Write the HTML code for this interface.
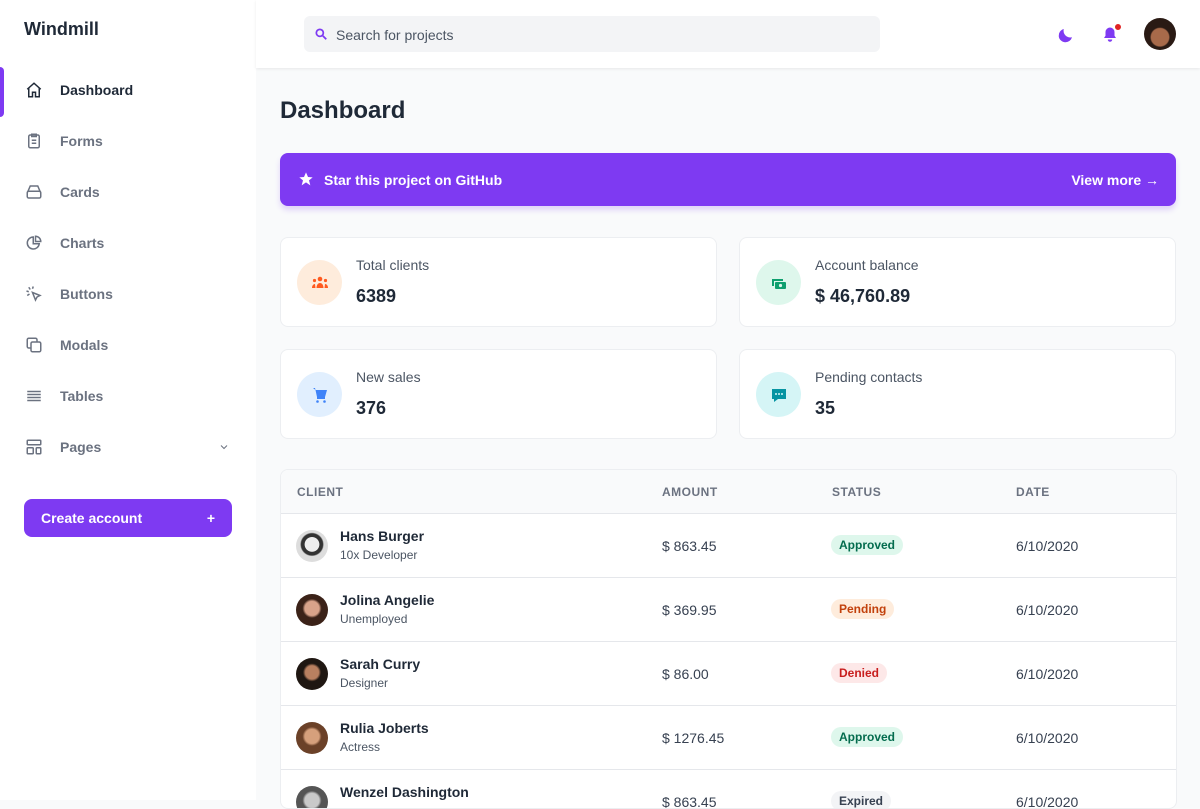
<!DOCTYPE html>
<html><head><meta charset="utf-8"><style>
*{box-sizing:border-box;margin:0;padding:0}
body{width:1200px;height:800px;overflow:hidden;font-family:"Liberation Sans",sans-serif;background:#f9fafb;color:#1a1c23;position:relative}
.side{position:absolute;left:0;top:0;width:256px;height:800px;background:#fff}
.logo{position:absolute;left:24px;top:19px;font-size:18px;font-weight:700;color:#1f2937}
.nav{position:absolute;left:0;width:256px;height:20px;font-size:14px;font-weight:700;color:#6b7280}
.nav svg{position:absolute;left:25px;top:1px}
.nav span{position:absolute;left:60px;top:2px}
.nav.act{color:#1f2937}
.bar{position:absolute;left:0;top:67px;width:4px;height:50px;background:#7e3af2;border-radius:0 8px 8px 0}
.btn{position:absolute;left:24px;top:499px;width:208px;height:38px;background:#7e3af2;border-radius:8px;color:#fff;font-size:14px;font-weight:700;padding:11px 17px}
.btn b{position:absolute;right:17px;top:11px;font-size:14px}
.hdr{position:absolute;left:256px;top:0;width:944px;height:68px;background:#fff;box-shadow:0 1px 3px rgba(0,0,0,.08)}
.search{position:absolute;left:48px;top:16px;width:576px;height:36px;background:#f3f4f6;border-radius:6px;font-size:14px;color:#4b5563;padding:11px 0 0 32px}
.search svg{position:absolute;left:10px;top:11px}
h1{position:absolute;left:280px;top:97px;font-size:24px;font-weight:700;color:#1f2937}
.gh{position:absolute;left:280px;top:153px;width:896px;height:53px;background:#7e3af2;border-radius:8px;color:#fff;font-size:14px;font-weight:700;box-shadow:0 4px 6px rgba(126,58,242,.2)}
.gh .l{position:absolute;left:44px;top:19px}
.gh .r{position:absolute;right:17px;top:19px}
.gh svg{position:absolute;left:18px;top:18px}
.card{position:absolute;width:437px;height:90px;background:#fff;border-radius:8px;border:1px solid #eceef1}
.card .ic{position:absolute;left:16px;top:22px;width:45px;height:45px;border-radius:50%}
.card .ic svg{position:absolute;left:13px;top:13px}
.card .t{position:absolute;left:75px;top:19px;font-size:14px;color:#4b5563}
.card .v{position:absolute;left:75px;top:48px;font-size:18px;font-weight:700;color:#1f2937}
.tbl{position:absolute;left:280px;top:469px;width:897px;height:340px;background:#fff;border:1px solid #eceef1;border-radius:8px;overflow:hidden}
.th{position:absolute;left:0;top:0;width:100%;height:44px;background:#f9fafb;border-bottom:1px solid #e5e7eb;font-size:12px;font-weight:700;color:#6b7280;letter-spacing:.5px}
.th span,.row span.c{position:absolute}
.row{position:absolute;left:0;width:100%;height:64px;border-bottom:1px solid #e5e7eb;font-size:14px;color:#374151}
.av{position:absolute;left:15px;top:16px;width:32px;height:32px;border-radius:50%}
.nm{position:absolute;left:59px;top:14px;font-weight:700;font-size:14px;color:#1f2937}
.jb{position:absolute;left:59px;top:34px;font-size:12px;color:#4b5563}
.pill{position:absolute;left:550px;top:21px;padding:3px 8px;border-radius:10px;font-size:12px;font-weight:700}
</style></head><body>
<div class="side">
<div class="logo">Windmill</div>
<div class="bar"></div>
<div class="nav act" style="top:80px"><svg width="18" height="18" viewBox="0 0 24 24" fill="none" stroke="currentColor" stroke-width="2"><path d="M3 11l9-8 9 8M5 9v12h5v-6h4v6h5V9"/></svg><span>Dashboard</span></div>
<div class="nav" style="top:131px"><svg width="18" height="18" viewBox="0 0 24 24" fill="none" stroke="currentColor" stroke-width="2"><rect x="5" y="4" width="14" height="17" rx="2"/><path d="M9 3h6v3H9zM9 11h6M9 15h6"/></svg><span>Forms</span></div>
<div class="nav" style="top:182px"><svg width="18" height="18" viewBox="0 0 24 24" fill="none" stroke="currentColor" stroke-width="2"><path d="M7 4h10l3 7H4z"/><rect x="3" y="11" width="18" height="9" rx="2"/></svg><span>Cards</span></div>
<div class="nav" style="top:233px"><svg width="18" height="18" viewBox="0 0 24 24" fill="none" stroke="currentColor" stroke-width="2"><path d="M11 4a8 8 0 108 9h-8z"/><path d="M14 3v7h7a7 7 0 00-7-7z"/></svg><span>Charts</span></div>
<div class="nav" style="top:284px"><svg width="18" height="18" viewBox="0 0 24 24" fill="none" stroke="currentColor" stroke-width="2"><path d="M10 10l10 4-4 2-2 4zM5 3l2 3M2 8l3 1M11 2l-1 3M3 14l3-2"/></svg><span>Buttons</span></div>
<div class="nav" style="top:335px"><svg width="18" height="18" viewBox="0 0 24 24" fill="none" stroke="currentColor" stroke-width="2"><rect x="8" y="8" width="13" height="13" rx="2"/><path d="M16 8V5a2 2 0 00-2-2H5a2 2 0 00-2 2v9a2 2 0 002 2h3"/></svg><span>Modals</span></div>
<div class="nav" style="top:386px"><svg width="18" height="18" viewBox="0 0 24 24" fill="none" stroke="currentColor" stroke-width="2"><path d="M3 6h18M3 10h18M3 14h18M3 18h18"/></svg><span>Tables</span></div>
<div class="nav" style="top:437px"><svg width="18" height="18" viewBox="0 0 24 24" fill="none" stroke="currentColor" stroke-width="2"><rect x="3" y="3" width="18" height="6" rx="1"/><rect x="3" y="13" width="8" height="8" rx="1"/><rect x="15" y="13" width="6" height="8" rx="1"/></svg><span>Pages</span><svg style="left:218px;top:4px" width="12" height="12" viewBox="0 0 24 24" fill="none" stroke="currentColor" stroke-width="2"><path d="M6 9l6 6 6-6"/></svg></div>
<div class="btn">Create account<b>+</b></div>
</div>
<div class="hdr">
<div class="search"><svg width="14" height="14" viewBox="0 0 24 24" fill="none" stroke="#7e3af2" stroke-width="3"><circle cx="10" cy="10" r="6"/><path d="M15 15l6 6"/></svg>Search for projects</div>
<svg style="position:absolute;left:801px;top:26px" width="18" height="18" viewBox="0 0 24 24"><path fill="#7e3af2" d="M20 15A9 9 0 019 4a9 9 0 1011 11z"/></svg>
<svg style="position:absolute;left:845px;top:26px" width="18" height="18" viewBox="0 0 24 24"><path fill="#7e3af2" d="M12 2a6 6 0 00-6 6v5l-2 3h16l-2-3V8a6 6 0 00-6-6zM9 18a3 3 0 006 0z"/></svg>
<div style="position:absolute;left:858px;top:23px;width:8px;height:8px;border-radius:50%;background:#e02424;border:1px solid #fff"></div>
<div style="position:absolute;left:888px;top:18px;width:32px;height:32px;border-radius:50%;background:radial-gradient(circle at 50% 60%,#a86a4a 0 35%,#2a1a14 40%)"></div>
</div>
<h1>Dashboard</h1>
<div class="gh"><svg width="16" height="16" viewBox="0 0 24 24"><path fill="#fff" d="M12 2l3 7 7 .5-5.5 4.5 2 7.5L12 17l-6.5 4.5 2-7.5L2 9.5 9 9z"/></svg><span class="l">Star this project on GitHub</span><span class="r">View more →</span></div>
<div class="card" style="left:280px;top:237px"><div class="ic" style="background:#feecdc"><svg width="20" height="20" viewBox="0 0 20 20" fill="#ff5a1f"><circle cx="10" cy="6" r="2.3"/><circle cx="4.5" cy="7.5" r="1.6"/><circle cx="15.5" cy="7.5" r="1.6"/><path d="M6.5 15c0-3 1.5-5 3.5-5s3.5 2 3.5 5zM2 15c0-2 1-4 3-4l.5 4zM18 15c0-2-1-4-3-4l-.5 4z"/></svg></div><div class="t">Total clients</div><div class="v">6389</div></div>
<div class="card" style="left:739px;top:237px"><div class="ic" style="background:#def7ec"><svg width="20" height="20" viewBox="0 0 20 20" fill="#0e9f6e"><path d="M3 6h11v2H5v5H3z"/><rect x="6" y="9" width="11" height="7" rx="1"/><circle cx="11.5" cy="12.5" r="1.6" fill="#def7ec"/></svg></div><div class="t">Account balance</div><div class="v">$ 46,760.89</div></div>
<div class="card" style="left:280px;top:349px"><div class="ic" style="background:#e1effe"><svg width="20" height="20" viewBox="0 0 20 20" fill="#3f83f8"><path d="M3 3h2l.5 2H17l-2 7H7L5.5 5"/><path d="M7 12h8v2H7z"/><circle cx="7.5" cy="16.5" r="1.3"/><circle cx="14.5" cy="16.5" r="1.3"/></svg></div><div class="t">New sales</div><div class="v">376</div></div>
<div class="card" style="left:739px;top:349px"><div class="ic" style="background:#d5f5f6"><svg width="20" height="20" viewBox="0 0 20 20" fill="#0694a2"><path d="M3 4h14v10H9l-4 3v-3H3z"/><circle cx="7" cy="9" r="1" fill="#d5f5f6"/><circle cx="10" cy="9" r="1" fill="#d5f5f6"/><circle cx="13" cy="9" r="1" fill="#d5f5f6"/></svg></div><div class="t">Pending contacts</div><div class="v">35</div></div>
<div class="tbl">
<div class="th"><span style="left:16px;top:15px">CLIENT</span><span style="left:381px;top:15px">AMOUNT</span><span style="left:551px;top:15px">STATUS</span><span style="left:735px;top:15px">DATE</span></div>
<div class="row" style="top:44px"><div class="av" style="background:radial-gradient(circle at 50% 45%,#eee 0 30%,#333 32% 45%,#ddd 50%)"></div><div class="nm">Hans Burger</div><div class="jb">10x Developer</div><span class="c" style="left:381px;top:24px">$ 863.45</span><span class="pill" style="background:#def7ec;color:#046c4e">Approved</span><span class="c" style="left:735px;top:24px">6/10/2020</span></div>
<div class="row" style="top:108px"><div class="av" style="background:radial-gradient(circle at 50% 45%,#d9a38a 0 30%,#3b2218 40%)"></div><div class="nm">Jolina Angelie</div><div class="jb">Unemployed</div><span class="c" style="left:381px;top:24px">$ 369.95</span><span class="pill" style="background:#feecdc;color:#c2410c">Pending</span><span class="c" style="left:735px;top:24px">6/10/2020</span></div>
<div class="row" style="top:172px"><div class="av" style="background:radial-gradient(circle at 50% 45%,#b98060 0 28%,#1f1712 38%)"></div><div class="nm">Sarah Curry</div><div class="jb">Designer</div><span class="c" style="left:381px;top:24px">$ 86.00</span><span class="pill" style="background:#fde8e8;color:#c81e1e">Denied</span><span class="c" style="left:735px;top:24px">6/10/2020</span></div>
<div class="row" style="top:236px"><div class="av" style="background:radial-gradient(circle at 50% 45%,#d6a07c 0 30%,#6b4128 40%)"></div><div class="nm">Rulia Joberts</div><div class="jb">Actress</div><span class="c" style="left:381px;top:24px">$ 1276.45</span><span class="pill" style="background:#def7ec;color:#046c4e">Approved</span><span class="c" style="left:735px;top:24px">6/10/2020</span></div>
<div class="row" style="top:300px"><div class="av" style="background:radial-gradient(circle at 50% 45%,#c9c9c9 0 30%,#555 40%)"></div><div class="nm">Wenzel Dashington</div><span class="c" style="left:381px;top:24px">$ 863.45</span><span class="pill" style="background:#f3f4f6;color:#374151">Expired</span><span class="c" style="left:735px;top:24px">6/10/2020</span></div>
</div>
</body></html>
